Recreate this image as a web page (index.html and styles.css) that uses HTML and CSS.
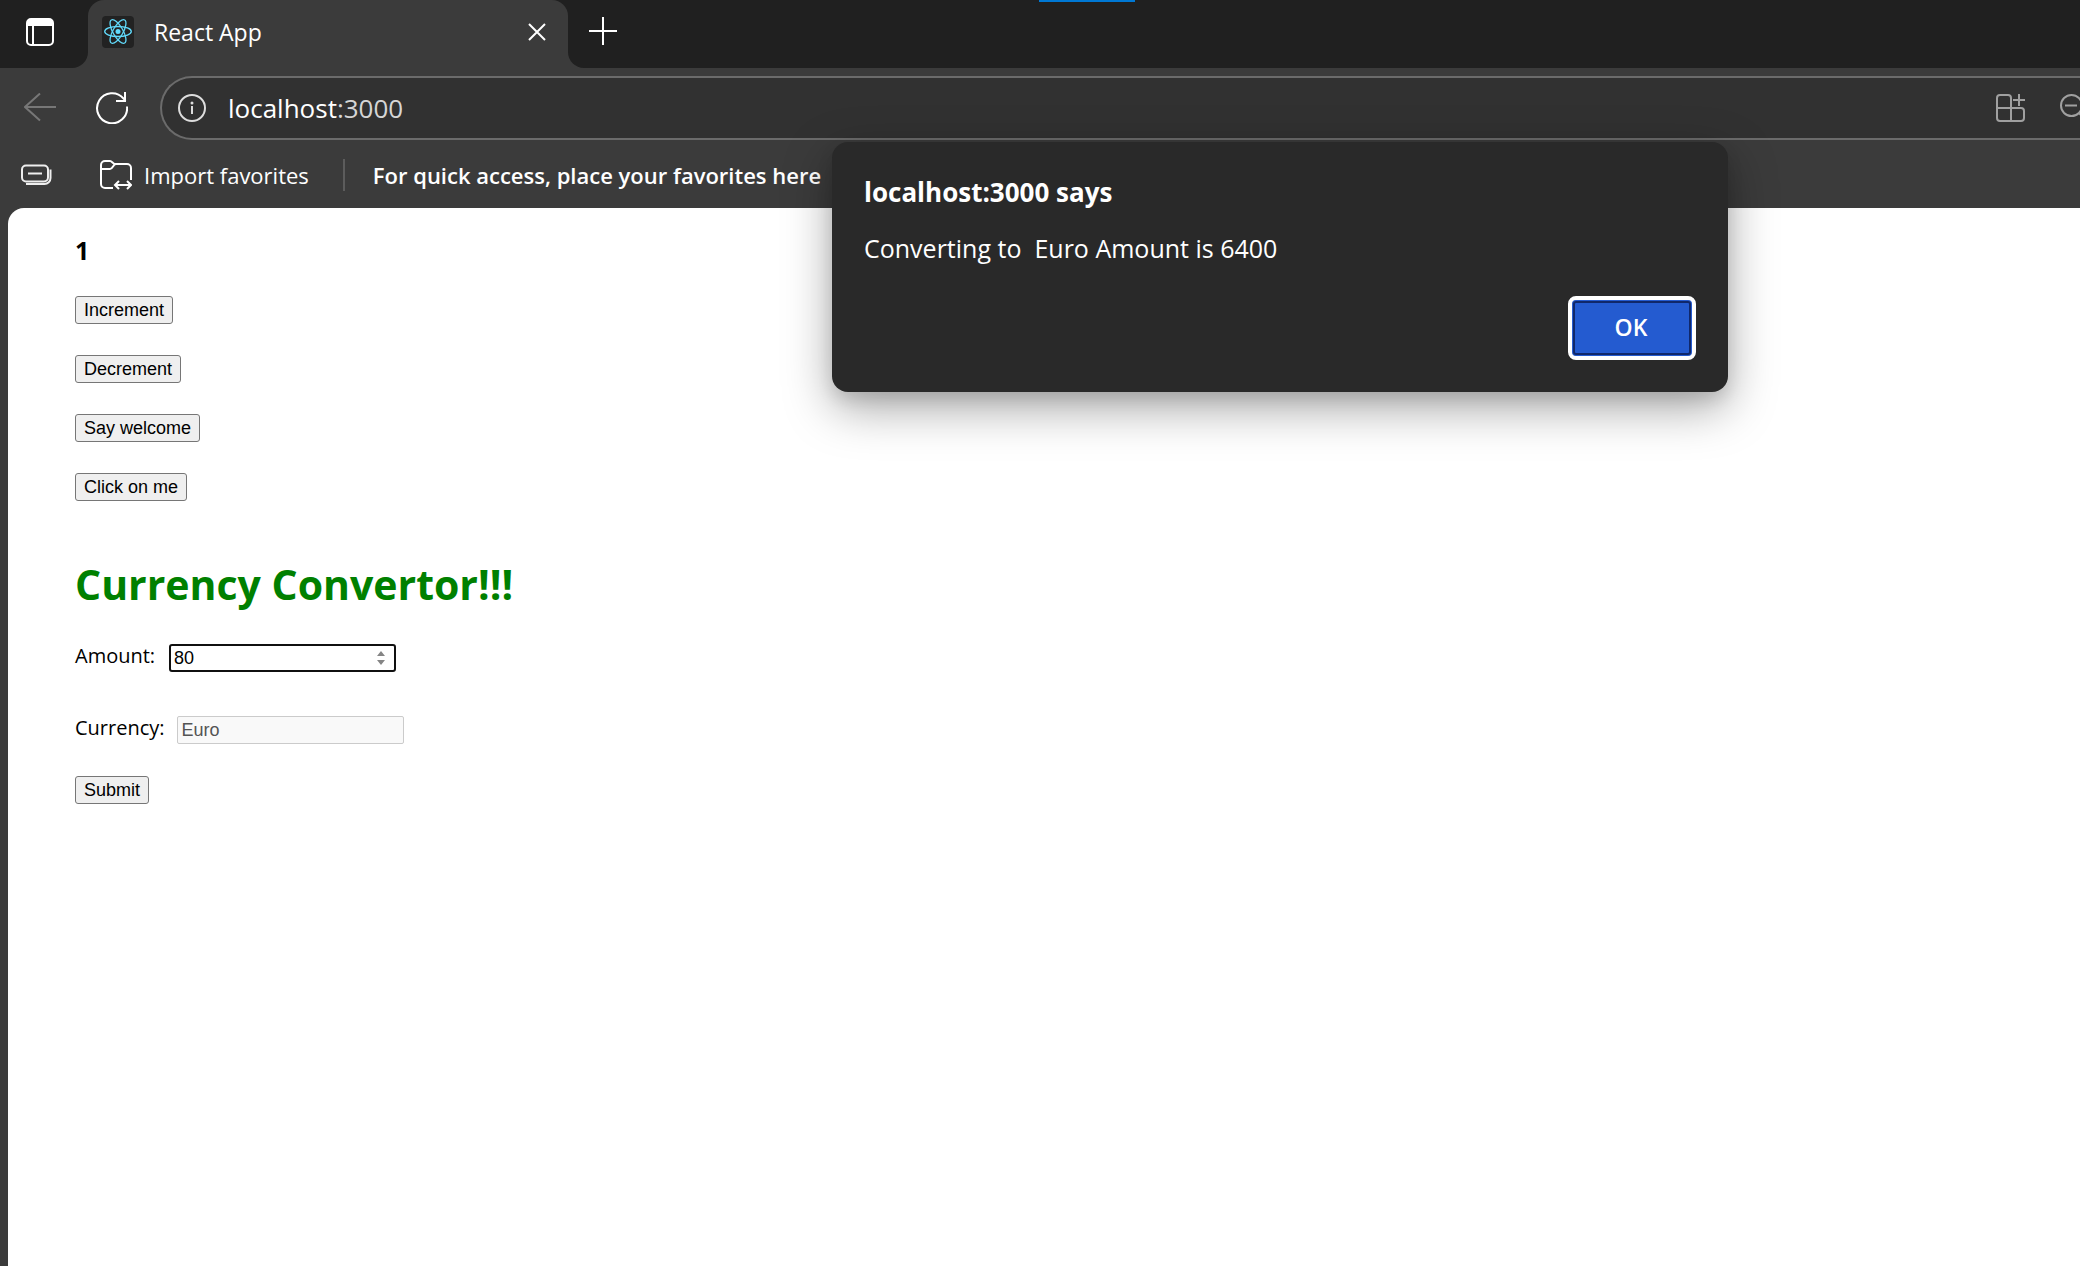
FILE: index.html
```html
<!DOCTYPE html>
<html lang="en">
<head>
<meta charset="utf-8">
<title>React App</title>
<link rel="stylesheet" href="styles.css">
</head>
<body>
<div class="browser">
  <header class="chrome">
    <div class="tab-strip">
      <div class="strip-start">
        <button class="icon-button" type="button" aria-label="Tab actions">
          <svg width="28" height="28" viewBox="0 0 28 28" fill="none" stroke="#fff" stroke-width="2"><rect x="1" y="1" width="26" height="26" rx="4"/><path d="M1 8V5a4 4 0 0 1 4-4h18a4 4 0 0 1 4 4v3z" fill="#fff" stroke="none"/><path d="M7 8v19"/></svg>
        </button>
      </div>
      <div class="tab-slot">
        <div class="tab">
          <svg class="favicon" width="32" height="32" viewBox="0 0 32 32" fill="none" stroke="#61dafb" stroke-width="1.3"><rect width="32" height="32" rx="4" fill="#222" stroke="none"/><circle cx="16" cy="15.500" r="2.500" fill="#61dafb" stroke="none"/><ellipse cx="16" cy="15.500" rx="13.300" ry="5"/><ellipse cx="16" cy="15.500" rx="13.300" ry="5" transform="rotate(60 16 15.500)"/><ellipse cx="16" cy="15.500" rx="13.300" ry="5" transform="rotate(120 16 15.500)"/></svg>
          <span class="tab-title">React App</span>
          <button class="icon-button" type="button" aria-label="Close tab">
            <svg width="18" height="18" viewBox="0 0 18 18" fill="none" stroke="#fff" stroke-width="2"><path d="M1 1l16 16M17 1L1 17"/></svg>
          </button>
        </div>
      </div>
      <div class="strip-end">
        <button class="icon-button" type="button" aria-label="New tab">
          <svg width="28" height="28" viewBox="0 0 28 28" fill="none" stroke="#fff" stroke-width="2"><path d="M14 0v28M0 14h28"/></svg>
        </button>
      </div>
      <span class="drag-mark"></span>
    </div>
    <div class="toolbar">
      <button class="icon-button back" type="button" aria-label="Back">
        <svg width="32" height="30" viewBox="0 0 32 30" fill="none" stroke="#777" stroke-width="2"><path d="M32 14H1M16 0.500L1 14l15 13.500"/></svg>
      </button>
      <button class="icon-button reload" type="button" aria-label="Refresh">
        <svg width="32" height="32" viewBox="0 0 32 32" fill="none" stroke="#fff" stroke-width="2"><path d="M31 14.500A15 15 0 1 1 27.500 6.500L29.500 9M29 0v9h-9"/></svg>
      </button>
      <div class="address">
        <svg class="info" width="28" height="28" viewBox="0 0 28 28" fill="none" stroke="#ddd" stroke-width="2"><circle cx="14" cy="14" r="13"/><path d="M14 12v8"/><circle cx="14" cy="9" r="1.500" fill="#ddd" stroke="none"/></svg>
        <span class="url">localhost<span class="port">:3000</span></span>
        <button class="icon-button" type="button" aria-label="Apps">
          <svg width="30" height="30" viewBox="0 0 30 30" fill="none" stroke="#a0a0a0" stroke-width="2"><path d="M15 28V5a3 3 0 0 0-3-3H4a3 3 0 0 0-3 3v20a3 3 0 0 0 3 3h21a3 3 0 0 0 3-3v-7a3 3 0 0 0-3-3H1M23 1v12M17 7h12"/></svg>
        </button>
        <button class="icon-button zoom-out" type="button" aria-label="Zoom out">
          <svg width="28" height="28" viewBox="0 0 28 28" fill="none" stroke="#a0a0a0" stroke-width="2"><circle cx="11.500" cy="11.500" r="10.500"/><path d="M5 11.500h12M19 19l8 8"/></svg>
        </button>
      </div>
    </div>
    <div class="favorites">
      <button class="icon-button" type="button" aria-label="Workspaces">
        <svg width="32" height="22" viewBox="0 0 32 22" fill="none" stroke="#eee" stroke-width="2"><rect x="2" y="1.500" width="26" height="16" rx="4"/><path d="M8 9.500h14"/><path d="M6 20h18.500a6 6 0 0 0 6-6V5.500"/></svg>
      </button>
      <button class="import" type="button">
        <svg width="32" height="31" viewBox="0 0 32 31" fill="none" stroke="#fff" stroke-width="2"><path d="M13 28H5a4 4 0 0 1-4-4V5a4 4 0 0 1 4-4h5c2 0 3 3 5 3h12a4 4 0 0 1 4 4v12M1 9h9c3 0 3-5 6-5M15 25h16M19 21l-4 4 4 4M27 21l4 4-4 4"/></svg>
        <span>Import favorites</span>
      </button>
      <span class="separator"></span>
      <strong class="hint">For quick access, place your favorites here</strong>
    </div>
  </header>

  <main class="page">
    <div class="counter">
      <strong class="count">1</strong>
      <button class="btn" type="button">Increment</button>
      <button class="btn" type="button">Decrement</button>
      <button class="btn" type="button">Say welcome</button>
      <button class="btn" type="button">Click on me</button>
    </div>
    <h1 class="title">Currency Convertor!!!</h1>
    <form class="converter">
      <div class="field amount">
        <label for="amount">Amount:</label>
        <span class="number">
          <input class="text-input active" id="amount" type="number" value="80">
          <svg class="spinner" width="8" height="14" viewBox="0 0 8 14" fill="#858585"><path d="M0 5l4-5 4 5zM0 9l4 5 4-5z"/></svg>
        </span>
      </div>
      <div class="field">
        <label for="currency">Currency:</label>
        <input class="text-input" id="currency" type="text" value="Euro" disabled>
      </div>
      <button class="btn" type="button">Submit</button>
    </form>
  </main>

  <section class="alert" role="alertdialog" aria-labelledby="alert-title" aria-describedby="alert-text">
    <h2 class="alert-title" id="alert-title">localhost:3000 says</h2>
    <p class="alert-text" id="alert-text">Converting to&nbsp; Euro Amount is 6400</p>
    <button class="ok" type="button">OK</button>
  </section>
</div>
</body>
</html>
```

FILE: styles.css
```css
* { box-sizing: border-box; }

body {
  margin: 0;
  background: #3b3b3b;
  font-family: "Open Sans", "Noto Sans", sans-serif;
  color: #000;
}

button { font: inherit; }

.browser {
  position: relative;
  display: flex;
  flex-direction: column;
  min-height: 100vh;
  overflow: hidden;
}

.chrome { color: #fff; }

.icon-button {
  display: flex;
  flex: none;
  padding: 0;
  border: 0;
  background: none;
}

/* Tabs */
.tab-strip {
  position: relative;
  display: flex;
  height: 68px;
}

.strip-start {
  width: 88px;
  padding: 18px 0 0 26px;
  background: #202020;
  border-bottom-right-radius: 16px;
}

.tab-slot {
  width: 480px;
  background: linear-gradient(#202020 50%, #3b3b3b 50%);
}

.tab {
  display: flex;
  align-items: center;
  height: 68px;
  padding: 0 22px 4px 14px;
  background: #3b3b3b;
  border-radius: 16px 16px 0 0;
}

.tab-title {
  flex: 1;
  margin-left: 20px;
  font-size: 23px;
}

.strip-end {
  flex: 1;
  padding: 17px 0 0 21px;
  background: #202020;
  border-bottom-left-radius: 16px;
}

.drag-mark {
  position: absolute;
  top: 0;
  left: 50%;
  width: 96px;
  height: 2px;
  margin-left: -1px;
  background: #0078d4;
}

/* Navigation */
.toolbar {
  display: flex;
  align-items: center;
  height: 80px;
  padding-left: 24px;
}

.reload { margin: 0 32px 0 40px; }

.address {
  display: flex;
  flex: 1;
  align-items: center;
  height: 64px;
  min-width: 0;
  padding-left: 16px;
  border: 2px solid #6b6b6b;
  border-right: 0;
  border-radius: 32px 0 0 32px;
  background: #313131;
  overflow: hidden;
}

.url {
  flex: 1;
  margin-left: 22px;
  font-size: 26px;
}

.port { color: #d6d6d6; }

.zoom-out {
  margin: 0 -8px 0 34px;
}

/* Favorites bar */
.favorites {
  display: flex;
  align-items: center;
  height: 60px;
  padding: 0 0 6px 20px;
  font-size: 22px;
  white-space: nowrap;
}

.import {
  display: flex;
  align-items: center;
  gap: 12px;
  margin-left: 48px;
  padding: 0;
  border: 0;
  background: none;
  color: #fff;
}

.separator {
  width: 2px;
  height: 32px;
  margin: 0 28px 0 34px;
  background: #5c5c5c;
}

.hint { font-weight: 600; }

/* Web page */
.page {
  flex: 1;
  margin-left: 8px;
  padding: 28px 67px;
  background: #fff;
  border-top-left-radius: 16px;
}

.counter {
  display: flex;
  flex-direction: column;
  align-items: flex-start;
  gap: 31px;
}

.count {
  font-size: 25px;
  line-height: 29px;
}

.btn {
  height: 28px;
  padding: 0 8px;
  border: 1px solid #767676;
  border-radius: 3px;
  background: #efefef;
  color: #000;
  font: 18px/24px "Liberation Sans", Arial, sans-serif;
}

.title {
  margin: 55px 0 32px;
  color: #008000;
  font-size: 41px;
  line-height: 56px;
}

.converter { font-size: 20px; }

.field {
  display: flex;
  align-items: flex-start;
  gap: 12px;
  margin-bottom: 31px;
  line-height: 24px;
}

.field.amount {
  gap: 14px;
  margin-bottom: 44px;
}

.number {
  position: relative;
  display: flex;
}

.text-input {
  width: 227px;
  height: 28px;
  padding: 0 4px;
  border: 1px solid #cbcbcb;
  border-radius: 2px;
  background: #f9f9f9;
  color: #545454;
  font: 18px "Liberation Sans", Arial, sans-serif;
  appearance: textfield;
}

.text-input.active {
  padding: 0 3px;
  border: 2px solid #101010;
  border-radius: 3px;
  background: #fff;
  color: #000;
  outline: 0;
}

.text-input::-webkit-inner-spin-button { appearance: none; }

.spinner {
  position: absolute;
  top: 7px;
  right: 11px;
}

/* Alert */
.alert {
  position: absolute;
  top: 142px;
  left: 40%;
  display: flex;
  flex-direction: column;
  width: 896px;
  padding: 32px;
  border-radius: 16px;
  background: #292929;
  color: #fff;
  box-shadow: 0 16px 48px rgba(0, 0, 0, .35), 0 8px 16px rgba(0, 0, 0, .1);
}

.alert-title {
  margin: 0;
  font-size: 26px;
  line-height: 36px;
}

.alert-text {
  margin: 22px 0 32px;
  font-size: 25px;
  line-height: 32px;
}

.ok {
  align-self: flex-end;
  width: 128px;
  height: 64px;
  padding: 0 2px 2px 0;
  border: 4px solid #fff;
  border-radius: 8px;
  background: #245bd0;
  box-shadow: inset 0 0 0 1px #245bd0, inset 0 0 0 3px #10286b;
  color: #fff;
  font-size: 23px;
  font-weight: 600;
}
```
